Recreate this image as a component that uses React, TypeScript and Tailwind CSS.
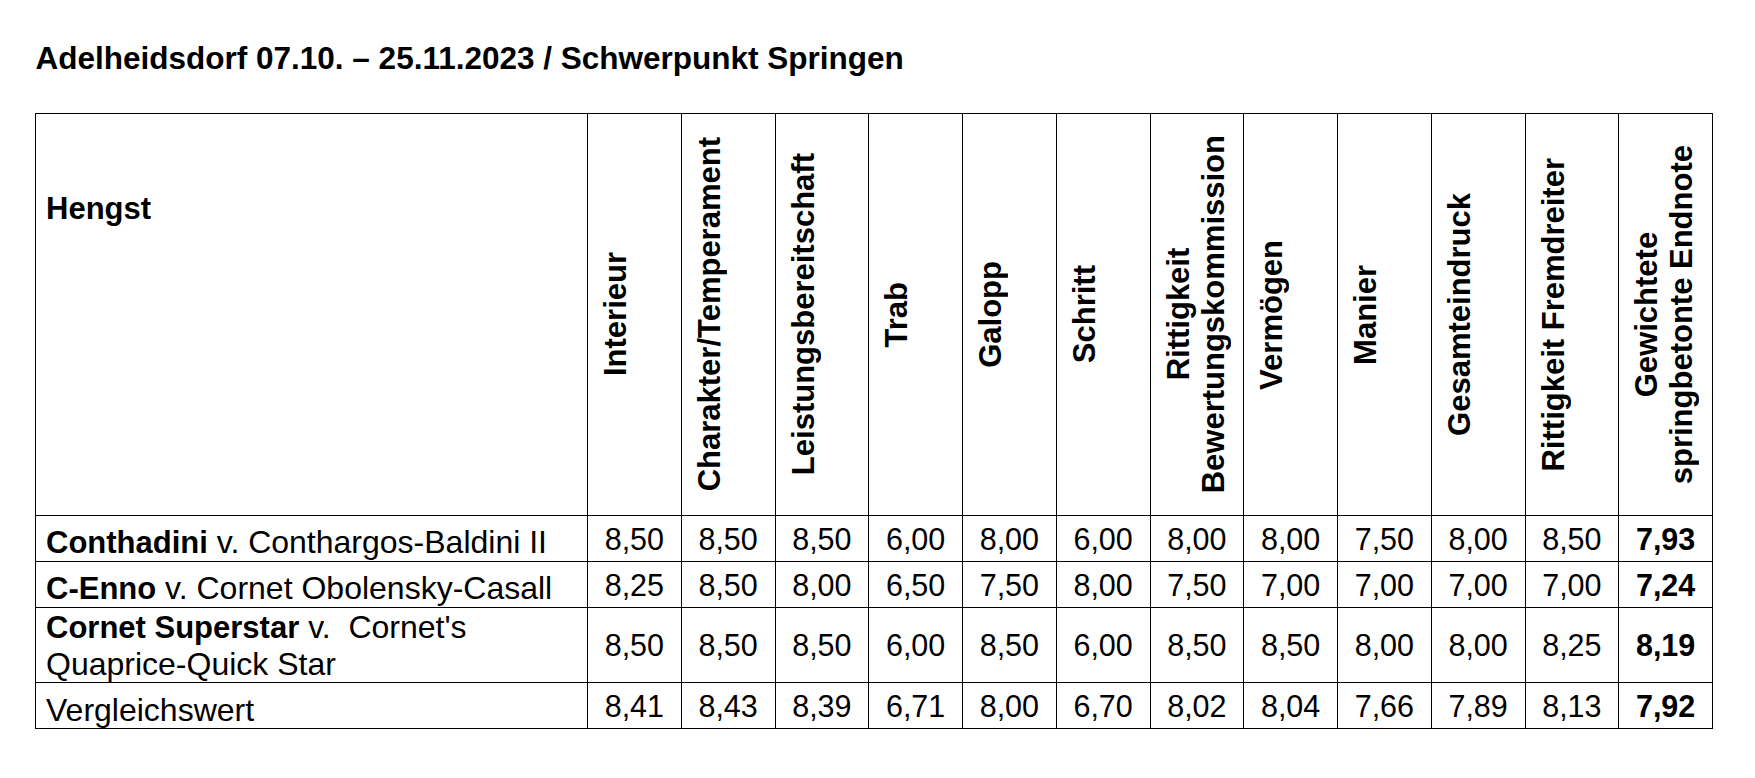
import React from "react";

const headers: string[][] = [
  ["Interieur"],
  ["Charakter/Temperament"],
  ["Leistungsbereitschaft"],
  ["Trab"],
  ["Galopp"],
  ["Schritt"],
  ["Rittigkeit", "Bewertungskommission"],
  ["Vermögen"],
  ["Manier"],
  ["Gesamteindruck"],
  ["Rittigkeit Fremdreiter"],
  ["Gewichtete", "springbetonte Endnote"],
];

type Row = {
  bold?: string;
  lines: string[];
  values: string[];
};

const rows: Row[] = [
  {
    bold: "Conthadini",
    lines: [" v. Conthargos-Baldini II"],
    values: ["8,50", "8,50", "8,50", "6,00", "8,00", "6,00", "8,00", "8,00", "7,50", "8,00", "8,50", "7,93"],
  },
  {
    bold: "C-Enno",
    lines: [" v. Cornet Obolensky-Casall"],
    values: ["8,25", "8,50", "8,00", "6,50", "7,50", "8,00", "7,50", "7,00", "7,00", "7,00", "7,00", "7,24"],
  },
  {
    bold: "Cornet Superstar",
    lines: [" v.\u00a0 Cornet's", "Quaprice-Quick Star"],
    values: ["8,50", "8,50", "8,50", "6,00", "8,50", "6,00", "8,50", "8,50", "8,00", "8,00", "8,25", "8,19"],
  },
  {
    lines: ["Vergleichswert"],
    values: ["8,41", "8,43", "8,39", "6,71", "8,00", "6,70", "8,02", "8,04", "7,66", "7,89", "8,13", "7,92"],
  },
];

export default function App() {
  return (
    <div className="min-h-[778px] bg-white text-black font-['Liberation_Sans',Arial,sans-serif]">
      <div className="pt-[40px] pl-[35.5px] text-[31.5px] leading-[36px] font-bold whitespace-nowrap">
        Adelheidsdorf 07.10. – 25.11.2023 / Schwerpunkt Springen
      </div>
      <div className="mt-[37px] ml-[35px] w-max grid grid-cols-[552px_repeat(12,93.75px)] grid-rows-[402px_46px_46px_75px_46px] border-l border-t border-black">
        <div className="border-r border-b border-black pl-[10px] pt-[77px] text-[31px] leading-[35px] font-bold">
          Hengst
        </div>
        {headers.map((h, i) => (
          <div key={i} className="flex items-center pl-[10px] border-r border-b border-black overflow-hidden">
            <div className="[writing-mode:vertical-rl] rotate-180 text-center font-bold text-[31px] leading-[35px] whitespace-nowrap">
              {h.map((line, j) => (
                <React.Fragment key={j}>
                  {j > 0 && <br />}
                  {line}
                </React.Fragment>
              ))}
            </div>
          </div>
        ))}
        {rows.map((r, ri) => (
          <React.Fragment key={ri}>
            <div className="flex items-end pl-[10px] border-r border-b border-black text-[32px] leading-[36px] whitespace-nowrap">
              <div>
                {r.bold && <span className="font-bold text-[31px]">{r.bold}</span>}
                {r.lines.map((l, li) => (
                  <React.Fragment key={li}>
                    {li > 0 && <br />}
                    {l}
                  </React.Fragment>
                ))}
              </div>
            </div>
            {r.values.map((v, vi) => (
              <div
                key={vi}
                className={
                  vi === 11
                    ? "flex items-center justify-center border-r border-b border-black text-[30.5px] leading-[36px] font-bold"
                    : "flex items-center justify-center border-r border-b border-black text-[30.5px] leading-[36px]"
                }
              >
                {v}
              </div>
            ))}
          </React.Fragment>
        ))}
      </div>
    </div>
  );
}
